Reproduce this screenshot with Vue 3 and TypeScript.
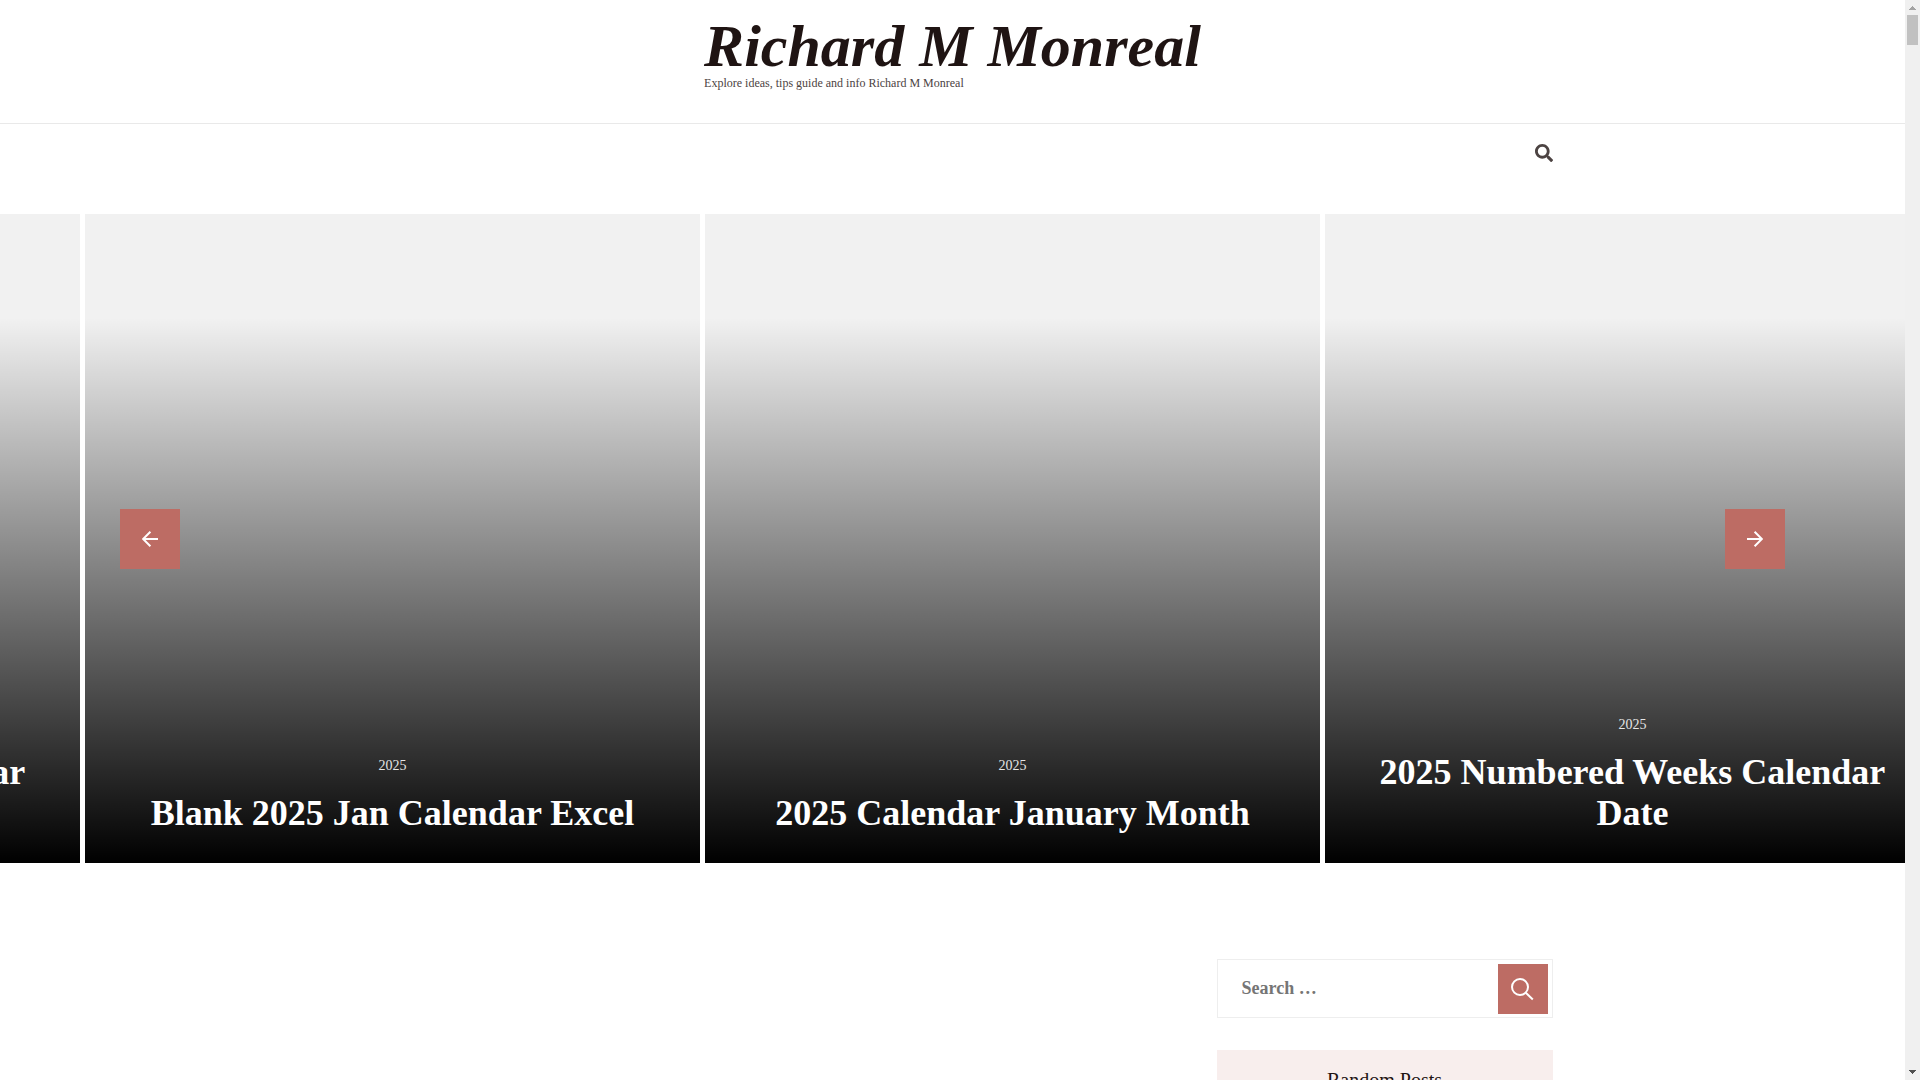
<script setup lang="ts">
interface Slide {
  category: string
  title: string
}

const slides: Slide[] = [
  { category: '2025', title: '2025 Numbered Weeks Calendar Date' },
  { category: '2025', title: 'Blank 2025 Jan Calendar Excel' },
  { category: '2025', title: '2025 Calendar January Month' },
  { category: '2025', title: '2025 Numbered Weeks Calendar Date' },
]
</script>

<template>
  <div class="window">
    <div class="page">
      <header class="site-header">
        <div class="branding">
          <h1 class="site-title"><a href="#">Richard M Monreal</a></h1>
          <p class="site-description">Explore ideas, tips guide and info Richard M Monreal</p>
        </div>
      </header>

      <nav class="menu-bar container" aria-label="Main">
        <button class="search-toggle" type="button" aria-label="Open search">
          <svg viewBox="0 0 512 512" width="18" height="18" aria-hidden="true">
            <path
              fill="currentColor"
              d="M505 442.7L405.3 343c-4.5-4.5-10.6-7-17-7H372c27.6-35.3 44-79.7 44-128C416 93.1 322.9 0 208 0S0 93.1 0 208s93.1 208 208 208c48.3 0 92.7-16.4 128-44v16.3c0 6.4 2.5 12.5 7 17l99.7 99.7c9.4 9.4 24.6 9.4 33.9 0l28.3-28.3c9.4-9.4 9.4-24.6.1-34zM208 336c-70.7 0-128-57.2-128-128 0-70.7 57.2-128 128-128 70.7 0 128 57.2 128 128 0 70.7-57.2 128-128 128z"
            />
          </svg>
        </button>
      </nav>

      <section class="banner" aria-label="Featured posts">
        <div class="track">
          <article v-for="(slide, i) in slides" :key="i" class="slide">
            <div class="caption">
              <a class="category" href="#">{{ slide.category }}</a>
              <h2 class="slide-title"><a href="#">{{ slide.title }}</a></h2>
            </div>
          </article>
        </div>
        <button class="arrow prev" type="button" aria-label="Previous">
          <svg viewBox="0 0 16 16" width="16" height="16" aria-hidden="true">
            <path d="M16 8H1M8.400 0.700L1.100 8l7.300 7.300" fill="none" stroke="currentColor" stroke-width="2" />
          </svg>
        </button>
        <button class="arrow next" type="button" aria-label="Next">
          <svg viewBox="0 0 16 16" width="16" height="16" aria-hidden="true">
            <path d="M0 8h15M7.600 0.700L14.900 8l-7.300 7.300" fill="none" stroke="currentColor" stroke-width="2" />
          </svg>
        </button>
      </section>

      <div class="content container">
        <main class="posts"></main>
        <aside class="sidebar">
          <form class="search-form" role="search" @submit.prevent>
            <input class="search-field" type="search" placeholder="Search …" aria-label="Search for" />
            <button class="search-submit" type="submit" aria-label="Search">
              <svg viewBox="0 0 24 24" width="24" height="24" aria-hidden="true">
                <g fill="none" stroke="currentColor" stroke-width="2">
                  <circle cx="9" cy="10" r="8" />
                  <path d="M14.800 15.800L21.800 22.500" />
                </g>
              </svg>
            </button>
          </form>
          <section class="widget">
            <h2 class="widget-title">Random Posts</h2>
          </section>
        </aside>
      </div>
    </div>

    <div class="scrollbar" aria-hidden="true">
      <svg class="scroll-arrow" viewBox="0 0 15 15" width="15" height="15" shape-rendering="crispEdges">
        <path d="M7 6h1v1h1v1h1v1h1v1H4V9h1V8h1V7h1z" fill="#a3a3a3" />
      </svg>
      <div class="thumb"></div>
      <svg class="scroll-arrow" viewBox="0 0 15 15" width="15" height="15" shape-rendering="crispEdges">
        <path d="M4 5h7v1h-1v1H9v1H8v1H7V8H6V7H5V6H4z" fill="#505050" />
      </svg>
    </div>
  </div>
</template>

<style>
body {
  margin: 0;
  overflow: hidden;
}
</style>

<style scoped>
.window {
  display: flex;
  height: 100vh;
  overflow: hidden;
  background: #fff;
  color: #1f1413;
  font-family: "Liberation Serif", "Times New Roman", serif;
}

.window *,
.window *::before {
  box-sizing: border-box;
}

.page {
  flex: 1;
  min-width: 0;
  overflow: hidden;
}

a {
  color: inherit;
  text-decoration: none;
}

button {
  display: flex;
  align-items: center;
  justify-content: center;
  padding: 0;
  border: 0;
  cursor: pointer;
}

.container {
  max-width: 1200px;
  margin: 0 auto;
}

.site-header {
  display: flex;
  justify-content: center;
  padding: 16px 0 32px;
  border-bottom: 1px solid #e9e9e9;
}

.site-title {
  margin: 0;
  font-size: 60px;
  font-style: italic;
  font-weight: 700;
  line-height: 60px;
}

.site-description {
  margin: 0;
  color: #4c4342;
  font-size: 12px;
  line-height: 15px;
}

.menu-bar {
  display: flex;
  justify-content: flex-end;
  height: 90px;
  padding-top: 20px;
}

.search-toggle {
  width: 18px;
  height: 18px;
  background: none;
  color: #4c4342;
}

.banner {
  position: relative;
  overflow: hidden;
}

.track {
  display: flex;
  gap: 5px;
  width: 100%;
  margin-left: calc(80px - (100% - 60px) / 3);
}

.slide {
  display: flex;
  flex: 0 0 calc((100% - 60px) / 3);
  flex-direction: column;
  justify-content: flex-end;
  height: 649px;
  background: linear-gradient(180deg, rgba(0, 0, 0, 0) 16%, #000 100%) #f1f1f1;
}

.caption {
  display: flex;
  flex-direction: column;
  align-items: center;
  gap: 17px;
  padding: 0 50px 29px;
  color: #fff;
  text-align: center;
}

.category {
  color: #e6e6e6;
  font-size: 14px;
  line-height: 20px;
}

.slide-title {
  margin: 0;
  font-size: 36px;
  font-weight: 700;
  line-height: 41px;
}

.arrow {
  position: absolute;
  top: 295px;
  width: 60px;
  height: 60px;
  background: #bd6c64;
  color: #fff;
}

.prev {
  left: 120px;
}

.next {
  right: 120px;
}

.content {
  display: flex;
  justify-content: space-between;
  padding-top: 96px;
}

.posts {
  flex: 1;
}

.sidebar {
  display: flex;
  flex: 0 0 336px;
  flex-direction: column;
  gap: 32px;
}

.search-form {
  display: flex;
  height: 59px;
  padding: 4px;
  border: 1px solid #eeeeee;
}

.search-field {
  flex: 1;
  min-width: 0;
  padding: 0 20px 2px;
  border: 0;
  outline: 0;
  background: none;
  color: #1f1413;
  font: 700 18px/24px "Liberation Serif", "Times New Roman", serif;
}

.search-field::placeholder {
  color: #757575;
  opacity: 1;
}

.search-submit {
  width: 50px;
  height: 50px;
  background: #bd6c64;
  color: #fff;
}

.widget-title {
  margin: 0;
  padding: 16px;
  background: #f8eeed;
  font-size: 20px;
  font-weight: 400;
  line-height: 28px;
  text-align: center;
}

.scrollbar {
  display: flex;
  flex: 0 0 15px;
  flex-direction: column;
  justify-content: space-between;
  background: #f0f0f0;
}

.scroll-arrow {
  display: block;
}

.thumb {
  height: 30px;
  margin: 0 2px auto;
  background: #c1c1c1;
}
</style>
